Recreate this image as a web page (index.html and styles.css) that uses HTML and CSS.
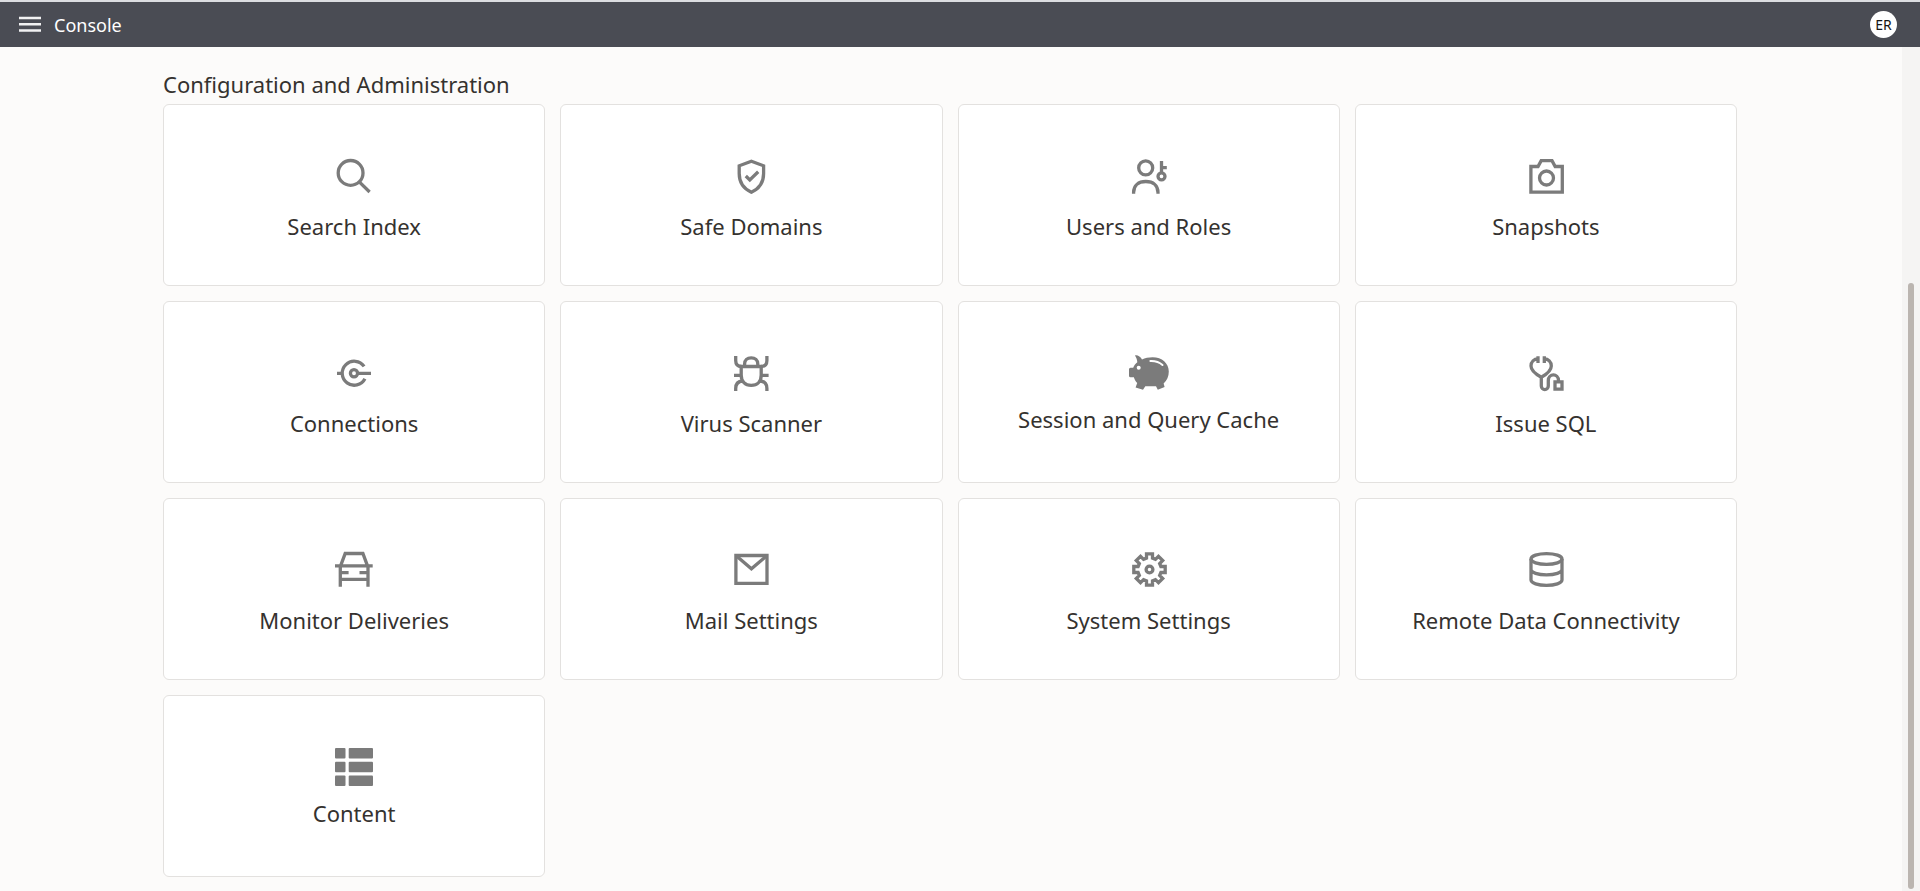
FILE: index.html
```html
<!DOCTYPE html>
<html lang="en">
<head>
<meta charset="utf-8">
<meta name="viewport" content="width=device-width, initial-scale=1">
<title>Console</title>
<link rel="stylesheet" href="styles.css">
</head>
<body>
<header class="topbar">
  <button class="menu-button" type="button" aria-label="Navigator">
    <svg class="menu-icon" viewBox="0 0 22 18" aria-hidden="true"><path d="M0 2h22M0 8.200h22M0 14.500h22"/></svg>
  </button>
  <h1 class="topbar-title">Console</h1>
  <button class="avatar" type="button">ER</button>
</header>
<div class="viewport">
  <main class="content">
    <section class="section">
      <h2 class="section-title">Configuration and Administration</h2>
      <nav class="cards">
        <a class="card" href="#search-index">
          <svg class="icon" viewBox="0 0 48 48" aria-hidden="true"><circle cx="20.6" cy="20.9" r="12.4"/><path d="M29.3 29.8L39.6 40"/></svg>
          <span class="card-label">Search Index</span>
        </a>
        <a class="card" href="#safe-domains">
          <svg class="icon" viewBox="0 0 48 48" aria-hidden="true"><path d="M24.4 9.2L36.6 13.8V21.5C36.6 30 32.6 36.5 24.4 40.2C16.2 36.5 12.2 30 12.2 21.5V13.8Z"/><path d="M18.8 24L22.8 27.9L31.2 19.8"/></svg>
          <span class="card-label">Safe Domains</span>
        </a>
        <a class="card" href="#users-roles">
          <svg class="icon" viewBox="0 0 48 48" aria-hidden="true"><circle cx="20.7" cy="15.9" r="7"/><path d="M8.6 41.7V40.4C8.6 33.6 13.4 29.5 20.8 29.5S33 33.6 33 40.4V41.7M36.5 9V20.5M36.5 15.7H41.8"/><circle cx="36.5" cy="24.3" r="3.5"/></svg>
          <span class="card-label">Users and Roles</span>
        </a>
        <a class="card" href="#snapshots">
          <svg class="icon" viewBox="0 0 48 48" aria-hidden="true"><path d="M8.9 14.5H16L19.2 8.6H30L33.2 14.5H40.3V40.2H8.9Z"/><circle cx="24.5" cy="26" r="7"/></svg>
          <span class="card-label">Snapshots</span>
        </a>
        <a class="card" href="#connections">
          <svg class="icon" viewBox="0 0 48 48" aria-hidden="true"><path d="M34.1 17.4A12 12 0 1 0 34.9 29.7M7 24.3H12M28 24.3H41"/><circle cx="24" cy="24.3" r="3.6"/></svg>
          <span class="card-label">Connections</span>
        </a>
        <a class="card" href="#virus-scanner">
          <svg class="icon" viewBox="0 0 48 48" aria-hidden="true"><path d="M14.2 17.5H34.2V26C34.2 32.5 30.3 36.4 24.2 36.4S14.2 32.5 14.2 26Z"/><path d="M17.6 17.5V15C17.6 11.2 20.2 8.9 24.2 8.9S30.8 11.2 30.8 15V17.5M8.7 7V11.5C8.7 15.3 10.4 17.5 14.5 17.5M39.9 7V11.5C39.9 15.3 38.2 17.5 34.1 17.5M7 26.3H14M34.3 26.3H41.6M8.7 42V39.5C8.7 34.7 11 32.3 15.6 32M39.9 42V39.5C39.9 34.7 37.6 32.3 33 32"/></svg>
          <span class="card-label">Virus Scanner</span>
        </a>
        <a class="card" href="#session-cache">
          <svg class="icon icon-solid" viewBox="0 0 40 40" aria-hidden="true"><path d="M6 2.6C7.4 1.2 11.7 3.6 13 6.4C16 4.9 19.5 4.2 23.6 4.2C33 4.2 39.8 10.2 39.8 18.5C39.8 23.5 38 27.5 34.6 30.4L35.6 34.1L28.8 36.8L27 33.3H16.3L14 36.8L6.6 34.6L8.2 30C6.5 28.5 5.4 26.5 4.9 24.3H1.5Q0 24.3 0 22.8V16.3Q0 14.8 1.5 14.8H4.2C5 12.5 6.3 10.7 8.3 9.2C8.2 7 7.4 4.8 6 2.6Z"/><circle class="cutout" cx="9.7" cy="14.8" r="2"/><path class="shine" d="M21.4 8C26.5 7.8 30.5 9.3 33.5 12"/></svg>
          <span class="card-label">Session and Query Cache</span>
        </a>
        <a class="card" href="#issue-sql">
          <svg class="icon" viewBox="0 0 48 48" aria-hidden="true"><path d="M16 7.3V14M16 10C12 10 9 12.8 9 17C9 21.5 12.5 24.5 19.3 28.2C26 24.5 29.3 21.5 29.3 17C29.3 12.8 26.3 10 22.3 10M22.3 7.3V14M19.3 27V37C19.3 41.7 26.3 41.7 26.3 37V31.5C26.3 24.1 36.5 24.1 36.5 31.5V32.5"/><path d="M33 32.8H40V40.2H33Z"/></svg>
          <span class="card-label">Issue SQL</span>
        </a>
        <a class="card" href="#monitor-deliveries">
          <svg class="icon" viewBox="0 0 48 48" aria-hidden="true"><path d="M5 19.8H42.7M10.6 19.8L15.2 7.5H32.9L37.5 19.8M10.3 19.8V40.7M38 19.8V40.7M10.3 26.6H18.6M29.5 26.6H38M10.3 33.3H38"/></svg>
          <span class="card-label">Monitor Deliveries</span>
        </a>
        <a class="card" href="#mail-settings">
          <svg class="icon" viewBox="0 0 48 48" aria-hidden="true"><path d="M8.9 9.5H40V37.4H8.9Z"/><path d="M9.5 10L24.4 22.8L39.4 10"/></svg>
          <span class="card-label">Mail Settings</span>
        </a>
        <a class="card" href="#system-settings">
          <svg class="icon" viewBox="0 0 48 48" aria-hidden="true"><g transform="translate(24.5 23.5)"><path d="M-3-15.7H3V-11.4L5.94-10.18L8.98-13.22L13.22-8.98L10.18-5.94L11.4-3H15.7V3H11.4L10.18 5.94L13.22 8.98L8.98 13.22L5.94 10.18L3 11.4V15.7H-3V11.4L-5.94 10.18L-8.98 13.22L-13.22 8.98L-10.18 5.94L-11.4 3H-15.7V-3H-11.4L-10.18-5.94L-13.22-8.98L-8.98-13.22L-5.94-10.18L-3-11.4Z"/><circle r="3.4"/></g></svg>
          <span class="card-label">System Settings</span>
        </a>
        <a class="card" href="#remote-data">
          <svg class="icon" viewBox="0 0 48 48" aria-hidden="true"><ellipse cx="24.5" cy="13" rx="15.5" ry="5.4"/><path d="M9 13V34C9 37 16 39.4 24.5 39.4S40 37 40 34V13M9 23.5C9 26.5 16 28.9 24.5 28.9S40 26.5 40 23.5"/></svg>
          <span class="card-label">Remote Data Connectivity</span>
        </a>
        <a class="card" href="#content">
          <svg class="icon icon-solid" viewBox="0 0 40 40" aria-hidden="true"><rect x="1" y="1" width="10.5" height="10.5" rx="1"/><rect x="14.7" y="1" width="24.3" height="10.5" rx="1"/><rect x="1" y="14.7" width="10.5" height="10.5" rx="1"/><rect x="14.7" y="14.7" width="24.3" height="10.5" rx="1"/><rect x="1" y="28.4" width="10.5" height="10.5" rx="1"/><rect x="14.7" y="28.4" width="24.3" height="10.5" rx="1"/></svg>
          <span class="card-label">Content</span>
        </a>
      </nav>
    </section>
  </main>
  <div class="scroll-track" aria-hidden="true"><div class="scroll-thumb"></div></div>
</div>
</body>
</html>
```
FILE: styles.css
```css
* {
  box-sizing: border-box;
}

body {
  margin: 0;
  min-height: 100vh;
  display: flex;
  flex-direction: column;
  background: #fcfbfa;
  color: #35322f;
  font-family: "Noto Sans", "Open Sans", sans-serif;
}

.topbar {
  display: flex;
  align-items: center;
  height: 47px;
  padding: 0 23px 0 19px;
  border-top: 2px solid #dcdde1;
  background: #4a4c54;
  color: #fff;
}

.menu-button {
  display: flex;
  padding: 0;
  border: 0;
  background: none;
  cursor: pointer;
}

.menu-icon {
  width: 22px;
  height: 18px;
  fill: none;
  stroke: #f1f1f2;
  stroke-width: 2.5;
}

.topbar-title {
  margin: 0 auto 0 13px;
  font-size: 18px;
  font-weight: 400;
  line-height: 24px;
}

.avatar {
  width: 27px;
  height: 27px;
  padding: 0;
  border: 0;
  border-radius: 50%;
  background: #fff;
  color: #161513;
  font: 14px/27px "Noto Sans", "Open Sans", sans-serif;
  text-align: center;
  cursor: pointer;
}

.viewport {
  flex: 1;
  display: flex;
}

.content {
  flex: 1;
  padding: 22px 17px 14px 15px;
}

.section {
  max-width: 1574px;
  margin: 0 auto;
}

.section-title {
  margin: 0 0 5px;
  font-size: 22px;
  font-weight: 400;
  line-height: 30px;
}

.cards {
  display: grid;
  grid-template-columns: repeat(4, minmax(0, 1fr));
  gap: 15px;
}

.card {
  display: flex;
  flex-direction: column;
  align-items: center;
  justify-content: center;
  gap: 12px;
  min-height: 182px;
  padding-top: 2px;
  border: 1px solid #e3e1df;
  border-radius: 6px;
  background: #fff;
  color: inherit;
  text-decoration: none;
}

.icon {
  width: 48px;
  height: 48px;
  fill: none;
  stroke: #7b7b7b;
  stroke-width: 3.3;
}

.icon-solid {
  width: 40px;
  height: 40px;
  fill: #7b7b7b;
  stroke: none;
}

.cutout {
  fill: #fff;
}

.shine {
  fill: none;
  stroke: #fff;
  stroke-width: 2;
  stroke-linecap: round;
}

.card-label {
  font-size: 22px;
  line-height: 28px;
  text-align: center;
}

.scroll-track {
  display: flex;
  flex-direction: column;
  justify-content: flex-end;
  align-items: center;
  width: 18px;
  padding-bottom: 2px;
  background: #f5f4f3;
}

.scroll-thumb {
  width: 6px;
  height: 72%;
  border-radius: 3px;
  background: #bbb5b0;
}
```
